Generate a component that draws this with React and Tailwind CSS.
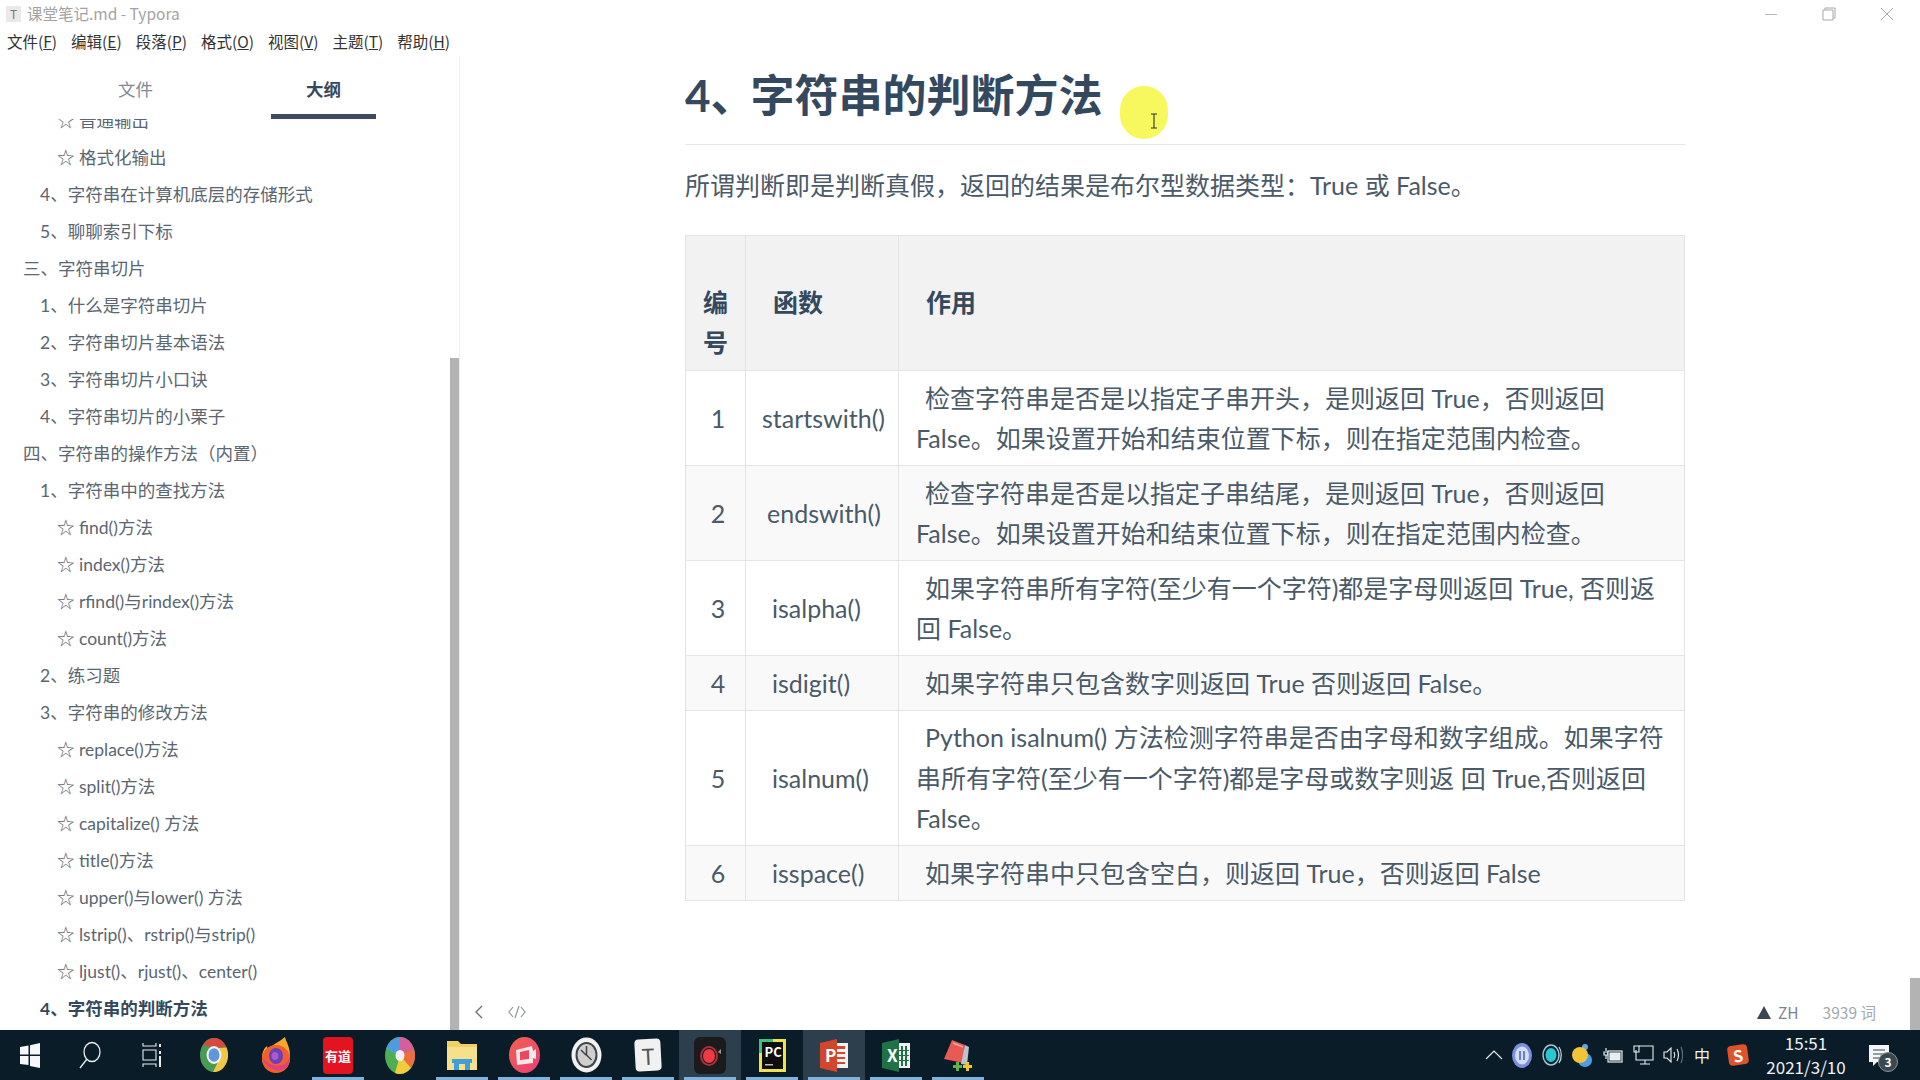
import { Fragment } from 'react'

const FONT = 'font-["Noto_Sans_CJK_SC",sans-serif]'
const DOC_FONT = 'font-["Lato","Noto_Sans_CJK_SC",sans-serif]'

const menus = [
  ['文件(', 'F'],
  ['编辑(', 'E'],
  ['段落(', 'P'],
  ['格式(', 'O'],
  ['视图(', 'V'],
  ['主题(', 'T'],
  ['帮助(', 'H'],
]

const outline = [
  [3, '☆ 普通输出'],
  [3, '☆ 格式化输出'],
  [2, '4、字符串在计算机底层的存储形式'],
  [2, '5、聊聊索引下标'],
  [1, '三、字符串切片'],
  [2, '1、什么是字符串切片'],
  [2, '2、字符串切片基本语法'],
  [2, '3、字符串切片小口诀'],
  [2, '4、字符串切片的小栗子'],
  [1, '四、字符串的操作方法（内置）'],
  [2, '1、字符串中的查找方法'],
  [3, '☆ find()方法'],
  [3, '☆ index()方法'],
  [3, '☆ rfind()与rindex()方法'],
  [3, '☆ count()方法'],
  [2, '2、练习题'],
  [2, '3、字符串的修改方法'],
  [3, '☆ replace()方法'],
  [3, '☆ split()方法'],
  [3, '☆ capitalize() 方法'],
  [3, '☆ title()方法'],
  [3, '☆ upper()与lower() 方法'],
  [3, '☆ lstrip()、rstrip()与strip()'],
  [3, '☆ ljust()、rjust()、center()'],
  [2, '4、字符串的判断方法', true],
]

const rows = [
  {
    no: '1',
    fn: 'startswith()',
    pad: 'pl-[16px]',
    h: 'h-[95px]',
    lines: ['检查字符串是否是以指定子串开头，是则返回 True，否则返回', 'False。如果设置开始和结束位置下标，则在指定范围内检查。'],
  },
  {
    no: '2',
    fn: 'endswith()',
    pad: 'pl-[21px]',
    h: 'h-[95px]',
    alt: true,
    lines: ['检查字符串是否是以指定子串结尾，是则返回 True，否则返回', 'False。如果设置开始和结束位置下标，则在指定范围内检查。'],
  },
  {
    no: '3',
    fn: 'isalpha()',
    pad: 'pl-[26px]',
    h: 'h-[95px]',
    lines: ['如果字符串所有字符(至少有一个字符)都是字母则返回 True, 否则返', '回 False。'],
  },
  {
    no: '4',
    fn: 'isdigit()',
    pad: 'pl-[26px]',
    h: 'h-[55px]',
    alt: true,
    lines: ['如果字符串只包含数字则返回 True 否则返回 False。'],
  },
  {
    no: '5',
    fn: 'isalnum()',
    pad: 'pl-[26px]',
    h: 'h-[135px]',
    lines: ['Python isalnum() 方法检测字符串是否由字母和数字组成。如果字符', '串所有字符(至少有一个字符)都是字母或数字则返 回 True,否则返回', 'False。'],
  },
  {
    no: '6',
    fn: 'isspace()',
    pad: 'pl-[26px]',
    h: 'h-[55px]',
    alt: true,
    lines: ['如果字符串中只包含空白，则返回 True，否则返回 False'],
  },
]

const Slot = ({ on, active, children }) => (
  <div className={`relative flex h-full w-[62px] shrink-0 items-center justify-center ${active ? 'bg-[#2d3f4c]' : ''}`}>
    {children}
    {on && <div className="absolute bottom-0 left-[5px] right-[5px] h-[3px] bg-[#7fb2dc]" />}
  </div>
)

const ChromeIcon = () => (
  <svg width="28" height="34" viewBox="0 0 28 34">
    <ellipse cx="14" cy="17" rx="14" ry="17" fill="#4a9a52" />
    <path d="M14 0a14 17 0 0 1 12.5 9.5L14 9.5 3 7A14 17 0 0 1 14 0z" fill="#d8483c" />
    <path d="M26.5 9.5A14 17 0 0 1 13 34l7-14-1-10z" fill="#f2c744" />
    <ellipse cx="14" cy="17" rx="7.5" ry="9" fill="#f1f4f6" />
    <ellipse cx="14" cy="17" rx="5.5" ry="6.8" fill="#5f96dc" />
  </svg>
)

const FirefoxIcon = () => (
  <svg width="30" height="36" viewBox="0 0 30 36">
    <path d="M24 0c1 5 5 9 5 19a14 15 0 0 1-28 2C1 16 3 11 6 9c0 3 1 4 2 5 1-6 9-8 16-14z" fill="#f9a825" />
    <ellipse cx="15" cy="22" rx="14" ry="14" fill="#f0602f" />
    <path d="M1 19c2 10 12 16 20 14 5-1 8-7 8-13-3 8-10 10-17 8-5-1-9-5-11-9z" fill="#e0417a" />
    <ellipse cx="15" cy="19" rx="7" ry="8" fill="#6c3fb5" />
    <ellipse cx="14" cy="19" rx="3.5" ry="4" fill="#a95ad1" />
  </svg>
)

const YoudaoIcon = () => (
  <div className="flex h-[37px] w-[30px] items-center justify-center rounded-[4px] bg-[#e3141f] text-[13px] font-bold leading-none text-white">
    有道
  </div>
)

const PinwheelIcon = () => (
  <svg width="30" height="37" viewBox="0 0 30 37">
    <ellipse cx="15" cy="18.5" rx="15" ry="18.5" fill="#4fae52" />
    <path d="M15 0A15 18.5 0 0 1 29 12L15 18.5z" fill="#d95c9c" />
    <path d="M29 12A15 18.5 0 0 1 26 31L15 18.5z" fill="#ef6d3c" />
    <path d="M26 31A15 18.5 0 0 1 10 36L15 18.5z" fill="#f0cd3c" />
    <path d="M15 0A15 18.5 0 0 0 1 12l14 6.5z" fill="#4e9ce0" />
    <ellipse cx="15" cy="18.5" rx="4.5" ry="5.5" fill="#f4f1f4" />
  </svg>
)

const FolderIcon = () => (
  <svg width="30" height="30" viewBox="0 0 30 30">
    <path d="M0 1h11l3 3h16v26H0z" fill="#f0d060" />
    <path d="M0 7h30v23H0z" fill="#f6e08c" />
    <path d="M7 30V19h16v11h-5v-6h-6v6z" fill="#3f9fd6" />
    <path d="M5 19h20v4H5z" fill="#3f9fd6" />
  </svg>
)

const CameraIcon = () => (
  <svg width="31" height="36" viewBox="0 0 31 36">
    <defs>
      <linearGradient id="camGrad" x1="0" y1="0" x2="1" y2="1">
        <stop offset="0" stopColor="#f2614c" />
        <stop offset="1" stopColor="#ea3f76" />
      </linearGradient>
    </defs>
    <ellipse cx="15.5" cy="18" rx="15.5" ry="18" fill="url(#camGrad)" />
    <path d="M7 13l16-4 1 5 3-2v10l-3-1v5l-16 2z" fill="#f7e7e7" />
    <path d="M11 15l9-2v9l-9 1z" fill="#e9485e" />
  </svg>
)

const ClockIcon = () => (
  <svg width="31" height="36" viewBox="0 0 31 36">
    <ellipse cx="15.5" cy="18" rx="15" ry="17.5" fill="#f2f2f2" />
    <ellipse cx="15.5" cy="18" rx="11" ry="13" fill="#3d4448" />
    <ellipse cx="15.5" cy="18" rx="9" ry="11" fill="#cfcfcf" />
    <path d="M15.5 9v9l5 5M10 13l5 5" stroke="#444" strokeWidth="1.5" fill="none" />
  </svg>
)

const TyporaIcon = () => (
  <div className={`flex h-[32px] w-[26px] rotate-[-3deg] items-center justify-center rounded-[4px] bg-[#f1f1f1] text-[22px] leading-none text-[#555] ${FONT}`}>T</div>
)

const RecorderIcon = () => (
  <svg width="32" height="37" viewBox="0 0 32 37">
    <rect width="32" height="37" rx="6" fill="#1b1b1e" />
    <ellipse cx="15" cy="19" rx="8" ry="9" fill="none" stroke="#a83037" strokeWidth="2" />
    <ellipse cx="15" cy="19" rx="6" ry="7" fill="#ee3a45" />
    <path d="M24 15l3-3v5z" fill="#9a9a9a" />
  </svg>
)

const PycharmIcon = () => (
  <div className="relative h-[33px] w-[27px]">
    <svg className="absolute inset-0" width="27" height="33" viewBox="0 0 27 33">
      <rect width="27" height="33" fill="#eee34a" />
      <rect width="14" height="14" fill="#3ec17c" />
      <rect x="3" y="3" width="21" height="27" fill="#0e0e0e" />
      <rect x="6" y="25" width="8" height="1.5" fill="#bdbdbd" />
    </svg>
    <div className={`absolute left-[6px] top-[6px] text-[13px] font-bold leading-none text-white ${FONT}`}>PC</div>
  </div>
)

const PowerpointIcon = () => (
  <div className="relative h-[33px] w-[28px]">
    <svg className="absolute inset-0" width="28" height="33" viewBox="0 0 28 33">
      <path d="M0 4L17 0v33L0 29z" fill="#d2472c" />
      <path d="M17 4h11v25H17z" fill="#f1f1f1" />
      <path d="M17 7h8v3h-8zM17 13h8v2h-8zM17 18h8v2h-8zM17 23h8v2h-8z" fill="#d2472c" />
    </svg>
    <div className={`absolute left-[5px] top-[7px] text-[17px] font-bold leading-none text-white ${FONT}`}>P</div>
  </div>
)

const ExcelIcon = () => (
  <div className="relative h-[33px] w-[28px]">
    <svg className="absolute inset-0" width="28" height="33" viewBox="0 0 28 33">
      <path d="M0 4L17 0v33L0 29z" fill="#1f7246" />
      <path d="M17 4h11v25H17z" fill="#f1f1f1" />
      <path d="M19 7h2v20h-2zM23 7h2v20h-2z" fill="#1f7246" />
      <path d="M17 11h10v1H17zM17 16h10v1H17zM17 21h10v1H17z" fill="#1f7246" />
    </svg>
    <div className={`absolute left-[5px] top-[7px] text-[17px] font-bold leading-none text-white ${FONT}`}>X</div>
  </div>
)

const NoteIcon = () => (
  <svg width="28" height="33" viewBox="0 0 28 33">
    <path d="M8 1l13 5-2 18-19-4z" fill="#e85a55" />
    <path d="M21 6l4 2-2 18-6-1z" fill="#bcc4cf" />
    <path d="M9 4l10 4" stroke="#f4a5a0" strokeWidth="1.5" />
    <path d="M9 26h3v-3h3v3h3v3h-3v3h-3v-3H9z" fill="#5cb54a" />
    <path d="M19 26h3v-3h3v3h3v3h-3v3h-3v-3h-3z" fill="#eccb2e" />
  </svg>
)

const TrayIcons = () => (
  <div className="flex h-full items-center">
    <svg width="18" height="10" viewBox="0 0 18 10" fill="none" stroke="#e8edf0" strokeWidth="1.2">
      <path d="M1 9l8-8 8 8" />
    </svg>
    <svg className="ml-[9px]" width="20" height="25" viewBox="0 0 20 25">
      <ellipse cx="10" cy="12.5" rx="10" ry="12.5" fill="#7a8fe0" />
      <ellipse cx="10" cy="12.5" rx="7" ry="9" fill="#d5dcf7" />
      <rect x="7" y="8" width="2" height="9" fill="#6a80d8" />
      <rect x="11" y="8" width="2" height="9" fill="#6a80d8" />
    </svg>
    <svg className="ml-[10px]" width="21" height="22" viewBox="0 0 21 22" fill="none">
      <ellipse cx="9" cy="11" rx="8" ry="10" stroke="#9fc6d8" strokeWidth="1.5" />
      <ellipse cx="9" cy="11" rx="5.5" ry="7" fill="#27c6d0" />
      <path d="M17 3c3 4 3 12 0 16" stroke="#cfe2ea" strokeWidth="1.2" />
    </svg>
    <svg className="ml-[9px]" width="20" height="25" viewBox="0 0 20 25">
      <circle cx="13" cy="4" r="3" fill="#5fa8e8" />
      <ellipse cx="13" cy="17" rx="7" ry="7" fill="#4a9fe6" />
      <ellipse cx="8" cy="12" rx="8" ry="8" fill="#f3c43a" />
    </svg>
    <svg className="ml-[11px]" width="20" height="17" viewBox="0 0 20 17" fill="none" stroke="#e8edf0" strokeWidth="1.2">
      <path d="M3 1v3M1 5h4v3H1zM3 8v4" />
      <rect x="5" y="4" width="14" height="11" fill="#0a1c28" />
      <rect x="7" y="6" width="10" height="7" fill="#e8edf0" />
    </svg>
    <svg className="ml-[10px]" width="21" height="20" viewBox="0 0 21 20" fill="none" stroke="#e8edf0" strokeWidth="1.1">
      <path d="M3 5v10h17V1H6" />
      <path d="M1 1h5v6H1zM12 15v4M7 19h10" />
    </svg>
    <svg className="ml-[9px]" width="20" height="18" viewBox="0 0 20 18" fill="none" stroke="#e8edf0" strokeWidth="1.1">
      <path d="M1 6h3l4-4v14l-4-4H1z" />
      <path d="M11 6c1 2 1 4 0 6M14 3c2 4 2 8 0 12" />
      <path d="M18 1c2 5 2 11 0 16" stroke="#64727c" />
    </svg>
    <span className={`ml-[11px] w-[20px] text-[16px] leading-none text-[#f0f3f5] ${FONT}`}>中</span>
    <div className={`ml-[14px] flex h-[20px] w-[20px] rotate-[-8deg] items-center justify-center rounded-[4px] bg-[#e0522a] text-[16px] font-bold leading-none text-white ${FONT}`}>S</div>
    <div className={`ml-[14px] flex w-[88px] flex-col items-center text-[17px] leading-[24px] text-[#f0f3f5] ${FONT}`}>
      <span>15:51</span>
      <span>2021/3/10</span>
    </div>
    <div className="relative ml-[19px] mr-[31px]">
      <svg className="block" width="20" height="21" viewBox="0 0 20 21">
        <path d="M0 0h20v17H8l-4 4v-4H0z" fill="#f4f6f7" />
        <path d="M4 5h12M4 9h12M4 13h8" stroke="#39474f" strokeWidth="1.2" />
      </svg>
      <div className={`absolute -bottom-[6px] -right-[9px] flex h-[20px] w-[20px] items-center justify-center rounded-full border border-[#8a959b] bg-[#3a4850] text-[12px] font-bold leading-none text-white ${FONT}`}>3</div>
    </div>
  </div>
)

const CellLines = ({ lines }) => (
  <div className="leading-[40.5px]">
    {lines.map((line, i) => (
      <Fragment key={i}>
        {i === 0 ? <span className="inline-block w-[9px]" /> : null}
        {line}
        {i < lines.length - 1 ? <br /> : null}
      </Fragment>
    ))}
  </div>
)

export default function App() {
  return (
    <div className={`relative flex h-[1080px] w-[1920px] flex-col overflow-hidden bg-white ${FONT}`}>
      {/* title bar */}
      <div className="flex h-[28px] shrink-0 items-center">
        <div className="ml-[6px] flex h-[16px] w-[15px] items-center justify-center bg-[#e9e9e9] text-[12px] leading-none text-[#777]">T</div>
        <span className="ml-[6px] text-[15.5px] text-[#a3a3a3]">课堂笔记.md - Typora</span>
        <div className="ml-auto flex items-center">
          <svg width="14" height="14" viewBox="0 0 14 14" stroke="#b9b9b9" fill="none">
            <path d="M1 7.5h12" />
          </svg>
          <svg className="ml-[44px]" width="14" height="14" viewBox="0 0 14 14" stroke="#a8a8a8" fill="none">
            <path d="M3 3V1h10v10h-2M1 3h10v10H1z" />
          </svg>
          <svg className="ml-[44px] mr-[26px]" width="14" height="14" viewBox="0 0 14 14" stroke="#a8a8a8" fill="none">
            <path d="M1 1l12 12M13 1L1 13" />
          </svg>
        </div>
      </div>

      {/* menu bar */}
      <div className="flex h-[28px] shrink-0 items-center gap-[14px] pl-[7px] text-[15.5px] text-[#333]">
        {menus.map(([label, key]) => (
          <span key={key}>
            {label}
            <span className="underline">{key}</span>)
          </span>
        ))}
      </div>

      <div className="flex min-h-0 flex-1">
        {/* sidebar */}
        <div className={`flex w-[460px] shrink-0 flex-col border-r border-[#efefef] ${DOC_FONT}`}>
          <div className="flex h-[63px] shrink-0">
            <div className="flex w-[271px] items-center justify-center pt-[5px] text-[17.5px] text-[#808a94]">文件</div>
            <div className="flex w-[105px] items-center justify-center border-b-[5px] border-[#3c4a66] pt-[10px] text-[17.5px] font-bold text-[#34495e]">大纲</div>
          </div>
          <div className="flex min-h-0 flex-1">
            <div className="min-w-0 flex-1 overflow-hidden">
              <div className="-mt-[16.5px]">
                {outline.map(([level, text, current], i) => (
                  <div
                    key={i}
                    className={`flex h-[37px] items-center whitespace-nowrap text-[17.5px] ${current ? 'font-bold text-[#34495e]' : 'text-[#5a6672]'} ${level === 1 ? 'pl-[23px]' : level === 2 ? 'pl-[40px]' : 'pl-[57px]'}`}
                  >
                    {text}
                  </div>
                ))}
              </div>
            </div>
            <div className="flex w-[9px] shrink-0 flex-col">
              <div className="h-[239px]" />
              <div className="flex-1 bg-[#b3b3b3]" />
            </div>
          </div>
        </div>

        {/* editor */}
        <div className="flex min-w-0 flex-1 flex-col">
          <div className="flex min-h-0 flex-1">
            <div className={`min-w-0 flex-1 pl-[225px] pt-[10px] text-[#4a5a68] ${DOC_FONT}`}>
              <div className="w-[1000px]">
                <h2 className="h-[79px] border-b border-[#e6e6e6] text-[44px] font-bold leading-[58px] text-[#34495e]">
                  4、<span className="-ml-[4px]">字符串的判断方法</span>
                </h2>
                <p className="mt-[22px] h-[36px] text-[25px] leading-[36px] text-[#4a5a68]">所谓判断即是判断真假，返回的结果是布尔型数据类型：True 或 False。</p>
                <table className="mt-[32px] w-[1000px] table-fixed border-collapse text-[25px]">
                  <colgroup>
                    <col className="w-[60px]" />
                    <col className="w-[153px]" />
                    <col />
                  </colgroup>
                  <thead>
                    <tr className="h-[135px] bg-[#f2f2f2] font-bold text-[#34495e]">
                      <th className="border border-[#e4e4e4] pt-[38px] text-center leading-[40.5px]">编<br />号</th>
                      <th className="border border-[#e4e4e4] pl-[27px] text-left font-bold">函数</th>
                      <th className="border border-[#e4e4e4] pl-[27px] text-left font-bold">作用</th>
                    </tr>
                  </thead>
                  <tbody>
                    {rows.map(row => (
                      <tr key={row.no} className={`${row.h} ${row.alt ? 'bg-[#f9f9fa]' : ''}`}>
                        <td className="border border-[#e4e4e4] pl-[5px] pt-[1px] text-center">{row.no}</td>
                        <td className={`whitespace-nowrap border border-[#e4e4e4] pt-[1px] ${row.pad}`}>{row.fn}</td>
                        <td className="whitespace-nowrap border border-[#e4e4e4] pl-[17px]">
                          <CellLines lines={row.lines} />
                        </td>
                      </tr>
                    ))}
                  </tbody>
                </table>
              </div>
            </div>
            <div className="flex w-[10px] shrink-0 flex-col">
              <div className="flex-1" />
              <div className="h-[52px] bg-[#b3b3b3]" />
            </div>
          </div>
        </div>
      </div>

      {/* footer controls lie over the editor */}
      <svg className="absolute left-[474px] top-[1005px]" width="10" height="14" viewBox="0 0 10 14" fill="none" stroke="#66727c" strokeWidth="1.4">
        <path d="M8 1L2 7l6 6" />
      </svg>
      <svg className="absolute left-[508px] top-[1005px]" width="18" height="14" viewBox="0 0 18 14" fill="none" stroke="#8a949c" strokeWidth="1.2">
        <path d="M5 2L1 7l4 5M13 2l4 5-4 5M11 1L7 13" />
      </svg>
      <div className="absolute right-[44px] top-[1001px] flex items-center text-[15.5px] text-[#7a8590]">
        <svg width="14" height="13" viewBox="0 0 14 13">
          <path d="M7 0l7 13H0z" fill="#3c4650" />
        </svg>
        <span className="ml-[7px]">ZH</span>
        <span className="ml-[24px] text-[#a0a8b0]">3939 词</span>
      </div>

      {/* highlighted pointer */}
      <div className="absolute left-[1120px] top-[86px] h-[53px] w-[48px] rounded-full bg-[#f7f75e]" />
      <svg className="absolute left-[1150px] top-[113px]" width="8" height="16" viewBox="0 0 8 16" fill="none" stroke="#333" strokeWidth="1.1">
        <path d="M1 1h6M4 1v14M1 15h6" />
      </svg>

      {/* taskbar */}
      <div className="flex h-[50px] shrink-0 items-center bg-[#0a1c28]">
        <div className="flex h-full w-[60px] shrink-0 items-center justify-center">
          <svg width="20" height="25" viewBox="0 0 20 25" fill="#f5f7f8">
            <path d="M0 4l8.5-1.5v9H0zM10 2.2L20 0v11.5H10zM0 13h8.5v9L0 21zM10 13h10v12l-10-2z" />
          </svg>
        </div>
        <div className="flex h-full w-[60px] shrink-0 items-center justify-center">
          <svg width="22" height="28" viewBox="0 0 22 28" fill="none" stroke="#e8edf0" strokeWidth="1.3">
            <ellipse cx="13" cy="11" rx="8" ry="9.5" />
            <path d="M8 18L1 27" />
          </svg>
        </div>
        <div className="flex h-full w-[63px] shrink-0 items-center justify-center">
          <svg width="20" height="24" viewBox="0 0 20 24" fill="none" stroke="#e8edf0" strokeWidth="1.1">
            <path d="M1 0v3h13V0M1 24v-3h13v3M1 7h13v10H1z" />
            <path d="M18 1v3M18 8v3M18 13v11" strokeWidth="2" />
          </svg>
        </div>
        <Slot><ChromeIcon /></Slot>
        <Slot><FirefoxIcon /></Slot>
        <Slot on><YoudaoIcon /></Slot>
        <Slot><PinwheelIcon /></Slot>
        <Slot on><FolderIcon /></Slot>
        <Slot on><CameraIcon /></Slot>
        <Slot on><ClockIcon /></Slot>
        <Slot on><TyporaIcon /></Slot>
        <Slot on active><RecorderIcon /></Slot>
        <Slot on><PycharmIcon /></Slot>
        <Slot on active><PowerpointIcon /></Slot>
        <Slot on><ExcelIcon /></Slot>
        <Slot on><NoteIcon /></Slot>
        <div className="ml-auto h-full">
          <TrayIcons />
        </div>
      </div>
    </div>
  )
}
